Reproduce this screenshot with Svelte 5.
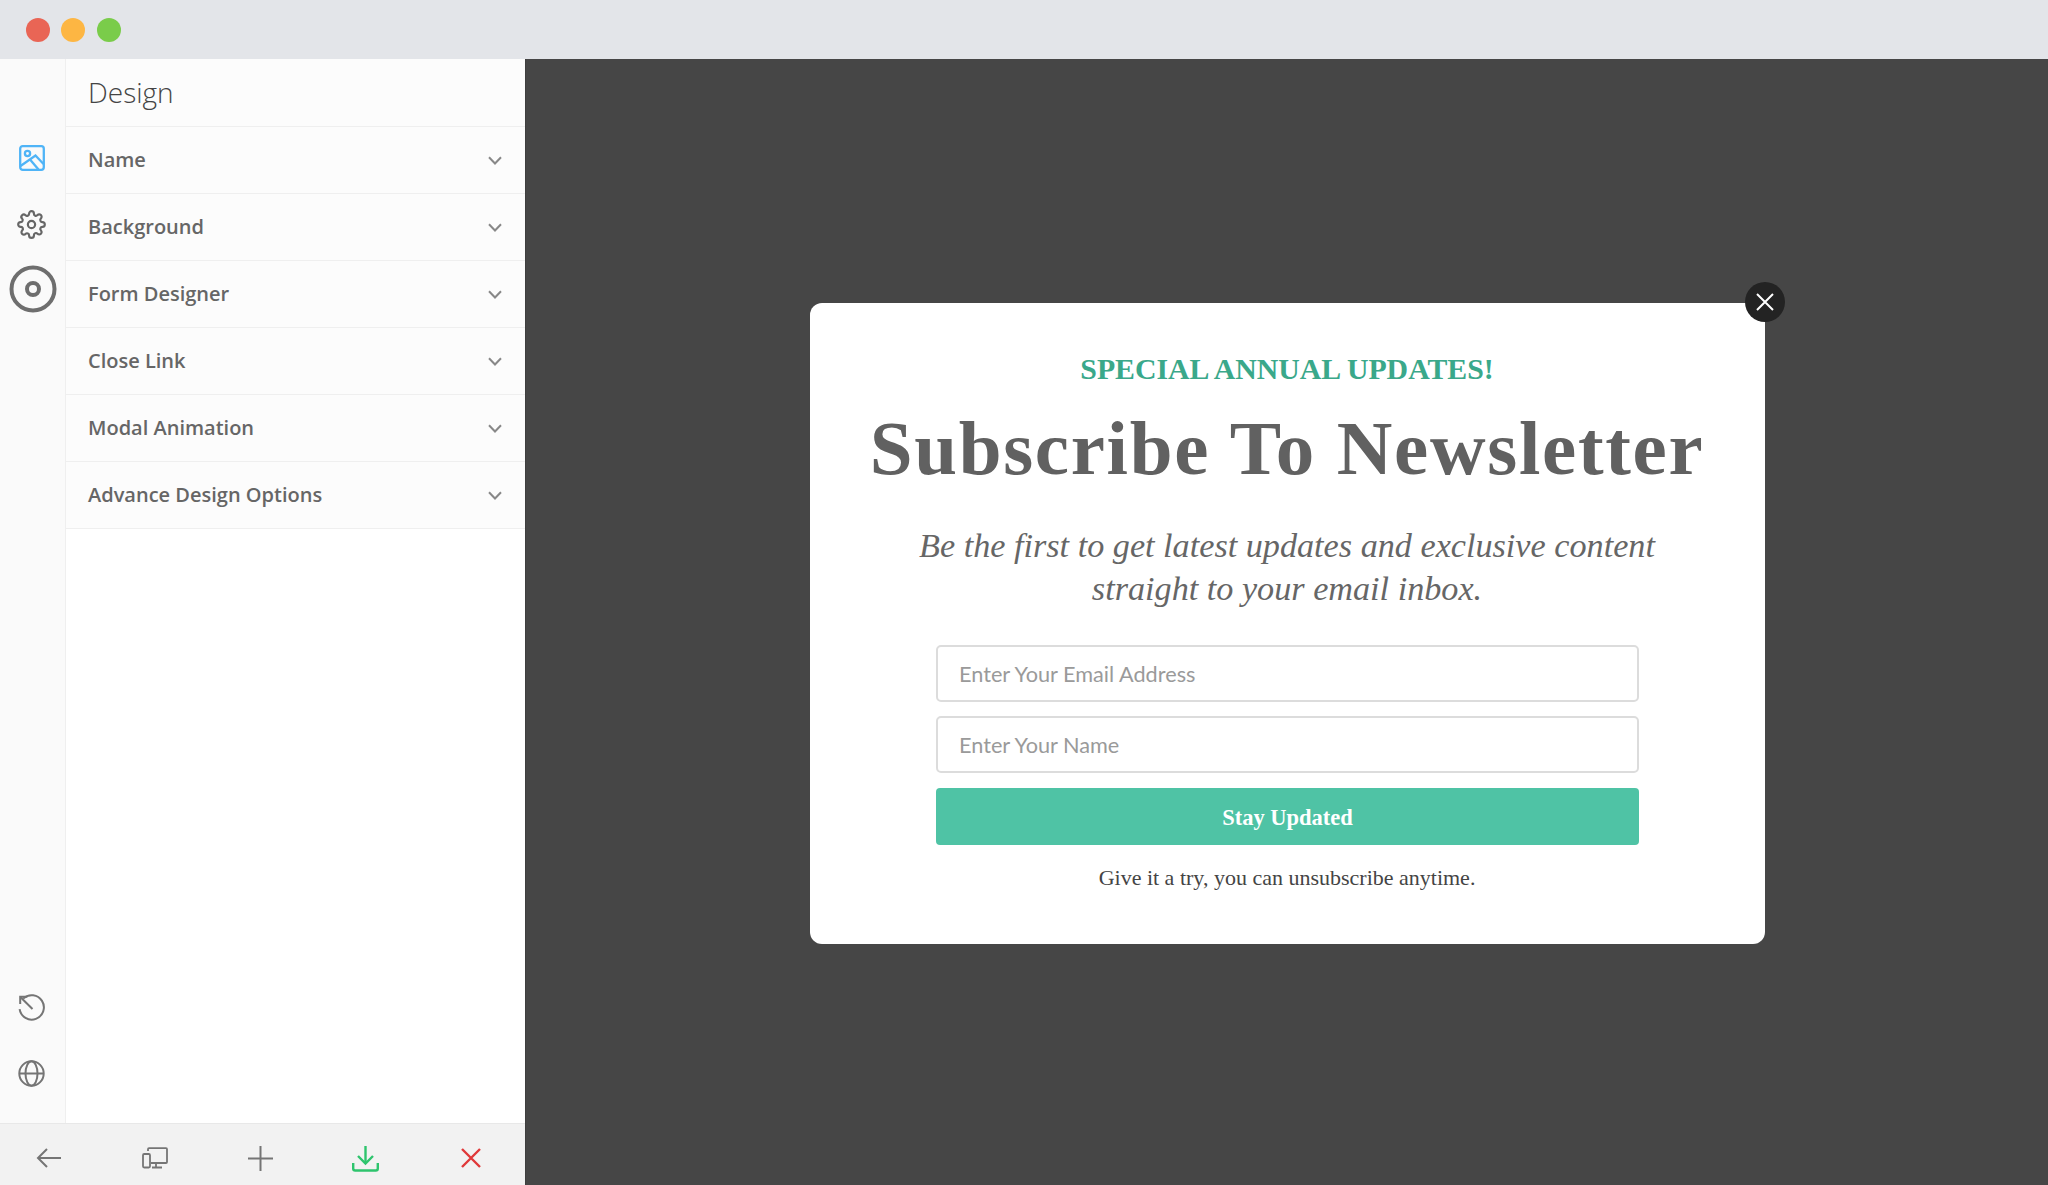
<script>
  const rows = ['Name', 'Background', 'Form Designer', 'Close Link', 'Modal Animation', 'Advance Design Options'];
</script>

<div class="window">
  <header class="titlebar">
    <span class="dot red"></span>
    <span class="dot yellow"></span>
    <span class="dot green"></span>
  </header>
  <div class="body">
    <aside class="sidebar">
      <div class="main">
        <nav class="rail">
          <div class="rail-group top">
            <svg class="ico blue" width="26" height="26" viewBox="0 0 26 26" fill="none"><rect x="1.2" y="1.2" width="23.6" height="23.6" rx="2.5"/><circle cx="8.5" cy="8.5" r="2.6"/><path d="M1.5 21 16.5 10.5 24.5 19"/><path d="M11 14.5 19.5 24.5"/></svg>
            <svg class="ico gear" width="29" height="29" viewBox="0 0 24 24" fill="none"><circle cx="12" cy="12" r="3"/><path d="M19.4 15a1.65 1.65 0 0 0 .33 1.82l.06.06a2 2 0 1 1-2.83 2.83l-.06-.06a1.65 1.65 0 0 0-2.9 1.17V21a2 2 0 1 1-4 0v-.09A1.65 1.65 0 0 0 9 19.4a1.65 1.65 0 0 0-1.82.33l-.06.06a2 2 0 1 1-2.83-2.83l.06-.06a1.65 1.65 0 0 0-1.17-2.9H3a2 2 0 1 1 0-4h.09A1.65 1.65 0 0 0 4.6 9a1.65 1.65 0 0 0-.33-1.82l-.06-.06a2 2 0 1 1 2.83-2.83l.06.06a1.65 1.65 0 0 0 1.82.33H9a1.65 1.65 0 0 0 1-1.51V3a2 2 0 1 1 4 0v.09a1.65 1.65 0 0 0 2.9 1.17l.06-.06a2 2 0 1 1 2.83 2.83l-.06.06a1.65 1.65 0 0 0-.33 1.82V9a1.65 1.65 0 0 0 1.51 1H21a2 2 0 1 1 0 4h-.09a1.65 1.65 0 0 0-1.51 1z"/></svg>
            <svg class="ring" width="48" height="48" viewBox="0 0 48 48" fill="none"><circle cx="24" cy="24" r="21.5"/><circle cx="24" cy="24" r="6"/></svg>
          </div>
          <div class="rail-group bottom">
            <svg class="ico" width="27" height="27" viewBox="0 0 27 27" fill="none"><path d="M5.2 4.6a12.2 12.2 0 1 1-3.6 10.6"/><path d="M2.2 10V2.8H9.4"/><path d="M2.6 3.2 14.5 15"/></svg>
            <svg class="ico" width="27" height="27" viewBox="0 0 27 27" fill="none"><circle cx="13.5" cy="13.5" r="12.2"/><ellipse cx="13.5" cy="13.5" rx="6" ry="12.2"/><path d="M1.5 13.5h24"/></svg>
          </div>
        </nav>
        <div class="panel">
          <h2 class="panel-title">Design</h2>
          {#each rows as row}
            <div class="row">
              <span>{row}</span>
              <svg class="chev" width="14" height="9" viewBox="0 0 14 9" fill="none"><path d="M1 1.2 7 7.5l6-6.3"/></svg>
            </div>
          {/each}
        </div>
      </div>
      <footer class="toolbar">
        <span class="tool"><svg class="ico" width="26" height="22" viewBox="0 0 26 22" fill="none"><path d="M25 11H2"/><path d="M11 2 2 11l9 9"/></svg></span>
        <span class="tool"><svg class="ico thin" width="26" height="22" viewBox="0 0 26 22" fill="none"><path d="M6 4V2.2A1 1 0 0 1 7 1.2h17a1 1 0 0 1 1 1V15a1 1 0 0 1-1 1H9"/><path d="M14 17v3M10 20.5h10"/><rect x="1" y="7" width="7" height="13.5" rx="1.2"/></svg></span>
        <span class="tool"><svg class="ico" width="25" height="25" viewBox="0 0 25 25" fill="none"><path d="M12.5 0v25M0 12.5h25"/></svg></span>
        <span class="tool"><svg class="ico dl" width="27" height="27" viewBox="0 0 27 27" fill="none"><path d="M13.5 1v17"/><path d="M6 11l7.5 7.5L21 11"/><path d="M1.2 18v5.5a2 2 0 0 0 2 2h20.6a2 2 0 0 0 2-2V18"/></svg></span>
        <span class="tool"><svg class="ico x" width="20" height="20" viewBox="0 0 20 20" fill="none"><path d="M1 1l18 18M19 1 1 19"/></svg></span>
      </footer>
    </aside>
    <main class="stage">
      <section class="modal">
        <button class="close" aria-label="Close">
          <svg width="18" height="18" viewBox="0 0 18 18" fill="none"><path d="M1 1l16 16M17 1 1 17"/></svg>
        </button>
        <p class="eyebrow">SPECIAL ANNUAL UPDATES!</p>
        <h1>Subscribe To Newsletter</h1>
        <p class="lead">Be the first to get latest updates and exclusive content<br />straight to your email inbox.</p>
        <form class="form">
          <input placeholder="Enter Your Email Address" />
          <input placeholder="Enter Your Name" />
          <button class="submit" type="button">Stay Updated</button>
        </form>
        <p class="note">Give it a try, you can unsubscribe anytime.</p>
      </section>
    </main>
  </div>
</div>

<style>
  :global(body) { margin: 0; }
  .window { width: 2048px; height: 1185px; display: flex; flex-direction: column; overflow: hidden; font-family: "Open Sans", sans-serif; }
  .titlebar { height: 59px; background: #e3e5e9; display: flex; align-items: center; gap: 11.5px; padding: 0 0 0 25.5px; flex: none; box-sizing: border-box; }
  .dot { width: 24px; height: 24px; border-radius: 50%; }
  .red { background: #e96555; }
  .yellow { background: #fdb643; }
  .green { background: #7acc4a; }
  .body { flex: 1; display: flex; min-height: 0; }
  .sidebar { width: 525px; flex: none; display: flex; flex-direction: column; background: #fff; }
  .main { flex: 1; display: flex; min-height: 0; }
  .rail { width: 65px; flex: none; background: #fafafa; border-right: 1px solid #efefef; display: flex; flex-direction: column; justify-content: space-between; align-items: center; }
  .rail-group { display: flex; flex-direction: column; align-items: center; }
  .rail-group.top { padding-top: 86px; gap: 38.5px; width: 100%; padding-right: 2px; box-sizing: border-box; }
  .rail-group.top .ring { margin: -12px 0 0 0; position: relative; left: 1.5px; }
  .rail-group.bottom { gap: 39px; padding-bottom: 36px; padding-right: 2px; }
  .ico { stroke: #757575; stroke-width: 2; display: block; flex: none; }
  .ico.blue { stroke: #4fb4f7; stroke-width: 2.3; }
  .ico.gear { stroke: #666; stroke-width: 1.8; }
  .ico.thin { stroke-width: 1.8; }
  .ico.dl { stroke: #2ec46d; stroke-width: 2.4; }
  .ico.x { stroke: #e0393a; stroke-width: 2.4; }
  .ring { display: block; stroke: #6e6e6e; stroke-width: 4; }
  .panel { flex: 1; min-width: 0; background: #fff; }
  .panel-title { margin: 0; height: 67.5px; box-sizing: border-box; padding: 0 0 0 22px; display: flex; align-items: center; font-size: 28px; font-weight: 300; color: #444; background: #fcfcfc; border-bottom: 1px solid #efefef; }
  .row { height: 67px; box-sizing: border-box; padding: 0 23.5px 0 22px; display: flex; align-items: center; justify-content: space-between; font-size: 20px; font-weight: 600; color: #666; background: #fcfcfc; border-bottom: 1px solid #efefef; }
  .chev { stroke: #888; stroke-width: 2; margin-top: 1px; }
  .toolbar { height: 62px; flex: none; box-sizing: border-box; background: #f2f2f2; border-top: 1px solid #e8e8e8; display: flex; align-items: center; justify-content: space-between; padding: 7px 40px 0 35px; }
  .tool { width: 28px; display: flex; justify-content: center; }
  .stage { flex: 1; background: #464646; display: flex; align-items: center; justify-content: center; border-left: 1px solid #3e3e3e; box-sizing: border-box; }
  .modal { position: relative; width: 955px; height: 641px; box-sizing: border-box; background: #fff; border-radius: 12px; padding-top: 47px; display: flex; flex-direction: column; align-items: center; text-align: center; font-family: "Liberation Serif", serif; margin-top: 2px; }
  .close { position: absolute; top: -21px; right: -20px; width: 40px; height: 40px; padding: 0; border: none; border-radius: 50%; background: #232323; display: flex; align-items: center; justify-content: center; }
  .close svg { stroke: #fff; stroke-width: 2; }
  .eyebrow { margin: 0; font-size: 29.8px; font-weight: 700; line-height: 38px; color: #3aa88a; }
  h1 { margin: 15px 0 0; font-size: 77px; line-height: 90px; font-weight: 700; color: #616161; letter-spacing: 1.7px; white-space: nowrap; }
  .lead { margin: 31px 0 0; font-size: 34.2px; line-height: 43px; font-style: italic; color: #666; }
  .form { width: 703px; margin: 35px 0 0 1px; display: flex; flex-direction: column; gap: 14px; }
  input { height: 57px; box-sizing: border-box; border: 2px solid #dcdcdc; border-radius: 5px; padding: 2px 21px 0; font-family: Lato, sans-serif; font-size: 21.7px; background: #fff; }
  input::placeholder { color: #9a9a9a; opacity: 1; }
  .submit { height: 57px; margin-top: 1px; border: none; border-radius: 4px; background: #4fc3a5; color: #fff; font-family: "Liberation Serif", serif; font-weight: 700; font-size: 22.5px; padding: 4px 0 0; }
  .note { margin: 19px 0 0; font-size: 22px; line-height: 28px; color: #444; }
</style>
